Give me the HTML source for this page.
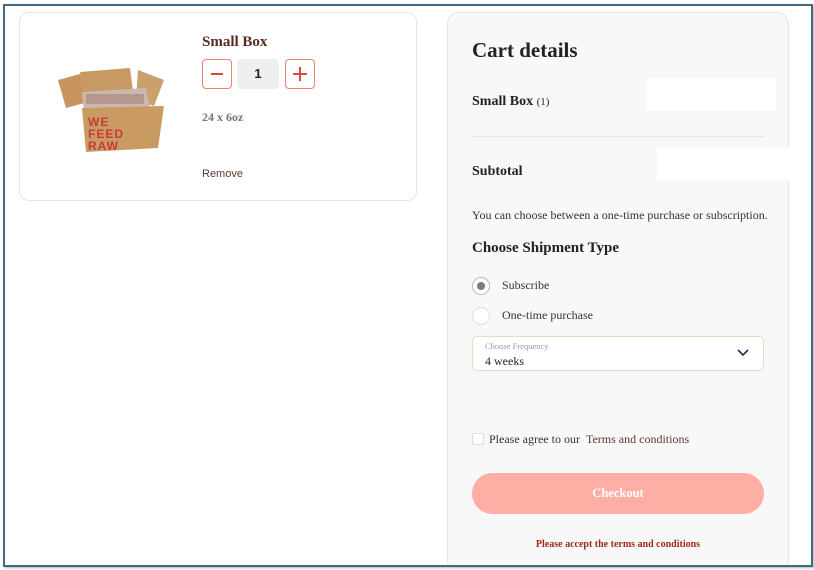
<!DOCTYPE html>
<html><head><meta charset="utf-8"><style>
*{box-sizing:border-box;margin:0;padding:0}
html,body{width:814px;height:570px;overflow:hidden}
body{background:#fff;position:relative;font-family:"Liberation Serif",serif}
.frame{position:absolute;left:3px;top:4px;width:810px;height:563px;border:2px solid #3e6b80;box-shadow:1px 1px 2px rgba(0,0,0,.3);overflow:hidden;background:#fff}
.abs{position:absolute}
.card{left:14px;top:6px;width:398px;height:189px;border:1px solid #ece4d6;border-radius:10px;background:#fff}
.panel{left:442px;top:6px;width:342px;height:560px;border:1px solid #ece4d6;border-radius:12px;background:#f8f8f8}
.btn{width:30px;height:30px;border:1px solid #f08070;border-radius:4px;background:#fff}
.t{position:absolute;white-space:nowrap}
</style></head><body>
<div class="frame">
 <div class="abs card">
  <svg class="abs" style="left:38px;top:55px" width="112" height="88" viewBox="0 0 112 88">
   <polygon points="0,12 22,6 30,34 8,40" fill="#c8955e"/>
   <polygon points="22,4 72,0 76,30 26,32" fill="#c79a64"/>
   <polygon points="80,2 106,12 96,38 78,32" fill="#caa06c"/>
   <polygon points="24,24 88,20 92,40 26,44" fill="#c9b8b0"/>
   <rect x="28" y="26" width="58" height="10" fill="#a88078" opacity=".6"/>
   <polygon points="24,40 106,38 100,80 28,84" fill="#c99a62"/>
   <text x="30" y="58" font-family="Liberation Sans" font-size="12" font-weight="bold" fill="#c83a3a" letter-spacing="1">WE</text>
   <text x="30" y="70" font-family="Liberation Sans" font-size="12" font-weight="bold" fill="#c83a3a" letter-spacing="1">FEED</text>
   <text x="30" y="82" font-family="Liberation Sans" font-size="12" font-weight="bold" fill="#c83a3a" letter-spacing="1">RAW</text>
  </svg>
  <div class="t" style="left:182px;top:21px;font-size:15px;font-weight:bold;color:#5a2a20">Small Box</div>
  <div class="abs btn" style="left:182px;top:46px"><svg width="28" height="28"><line x1="8" y1="14" x2="20" y2="14" stroke="#e0473a" stroke-width="2"/></svg></div>
  <div class="abs" style="left:217px;top:46px;width:42px;height:30px;background:#eee;border-radius:4px;font-family:'Liberation Sans';font-size:13px;font-weight:bold;text-align:center;line-height:30px;color:#222">1</div>
  <div class="abs btn" style="left:265px;top:46px"><svg width="28" height="28"><line x1="7" y1="14" x2="21" y2="14" stroke="#e0473a" stroke-width="2"/><line x1="14" y1="7" x2="14" y2="21" stroke="#e0473a" stroke-width="2"/></svg></div>
  <div class="t" style="left:182px;top:97px;font-size:12px;font-weight:bold;color:#777">24 x 6oz</div>
  <div class="t" style="left:182px;top:155px;font-family:'Liberation Sans';font-size:11px;color:#5a3a30">Remove</div>
 </div>
 <div class="abs panel">
  <div class="t" style="left:24px;top:25px;font-size:21px;font-weight:bold;color:#222">Cart details</div>
  <div class="t" style="left:24px;top:81px;font-size:14px;font-weight:bold;color:#222">Small Box <span style="font-size:11px;font-weight:normal">(1)</span></div>
  <div class="abs" style="left:198px;top:66px;width:130px;height:32px;background:#fff"></div>
  <div class="abs" style="left:24px;top:123px;width:292px;height:1px;background:#ece4d6"></div>
  <div class="abs" style="left:209px;top:135px;width:132px;height:32px;background:#fff"></div>
  <div class="t" style="left:24px;top:151px;font-size:14px;font-weight:bold;color:#222">Subtotal</div>
  <div class="t" style="left:24px;top:195px;font-size:12px;color:#333">You can choose between a one-time purchase or subscription.</div>
  <div class="t" style="left:24px;top:227px;font-size:15px;font-weight:bold;color:#222">Choose Shipment Type</div>
  <div class="abs" style="left:24px;top:264px;width:18px;height:18px;border:1.5px solid #bbb;border-radius:50%;background:#fff"><div class="abs" style="left:3.5px;top:3.5px;width:8px;height:8px;border-radius:50%;background:#8a7676"></div></div>
  <div class="t" style="left:54px;top:265px;font-size:12px;color:#333">Subscribe</div>
  <div class="abs" style="left:24px;top:294px;width:18px;height:18px;border:1px solid #e6dfd2;border-radius:50%;background:#fff"></div>
  <div class="t" style="left:54px;top:295px;font-size:12px;color:#333">One-time purchase</div>
  <div class="abs" style="left:24px;top:323px;width:292px;height:35px;border:1px solid #e6dcc8;border-radius:5px;background:#fff">
   <div class="t" style="left:12px;top:4px;font-size:8.5px;color:#999">Choose Frequency</div>
   <div class="t" style="left:12px;top:17px;font-size:12px;color:#222">4 weeks</div>
   <svg class="abs" style="left:264px;top:12px" width="12" height="8"><polyline points="1,1 6,6 11,1" fill="none" stroke="#3a2a2a" stroke-width="1.6"/></svg>
  </div>
  <div class="abs" style="left:24px;top:420px;width:12px;height:12px;border:1px solid #ddd;border-radius:2px;background:#fff"></div>
  <div class="t" style="left:41px;top:419px;font-size:12px;color:#333">Please agree to our &nbsp;<span style="color:#5a3a30">Terms and conditions</span></div>
  <div class="abs" style="left:24px;top:460px;width:292px;height:41px;border-radius:21px;background:#ffaea6;color:#fff;font-size:12.5px;font-weight:bold;text-align:center;line-height:41px">Checkout</div>
  <div class="t" style="left:0;width:340px;text-align:center;top:526px;font-size:10px;font-weight:bold;color:#a02a1a">Please accept the terms and conditions</div>
 </div>
</div>
</body></html>
